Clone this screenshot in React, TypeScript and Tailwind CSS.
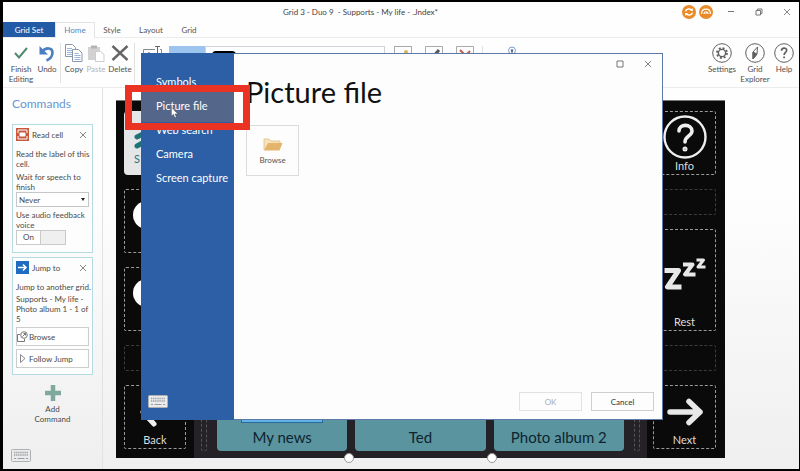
import type { ReactNode } from "react";

const NAV_TOP = "Symbols";
const NAV_REST = ["Web search", "Camera", "Screen capture"];
const ALBUMS = ["My news", "Ted", "Photo album 2"];

function KeyboardIcon({ className = "" }: { className?: string }) {
  return (
    <svg viewBox="0 0 20 13" className={`h-[13px] w-5 ${className}`} aria-hidden="true">
      <rect x="0.5" y="0.5" width="19" height="12" rx="1" fill="#e9ebee" stroke="#b0b0b0" />
      <path d="M3 3.5h14M3 6h14" stroke="#9c9c9c" strokeWidth="1.4" strokeDasharray="1.3 0.8" />
      <path d="M3 9.5h2M6.5 9.5h7M15 9.5h2" stroke="#9c9c9c" strokeWidth="1.2" />
    </svg>
  );
}

function CloseIcon({ className = "" }: { className?: string }) {
  return (
    <svg viewBox="0 0 8 8" className={`size-2 ${className}`} aria-hidden="true">
      <path d="M1 1l6 6M7 1L1 7" stroke="#777" strokeWidth="0.9" fill="none" />
    </svg>
  );
}

function ToolButton({ label, width, muted, children }: {
  label: string;
  width: string;
  muted?: boolean;
  children: ReactNode;
}) {
  return (
    <button
      className={`flex shrink-0 flex-col items-center gap-px text-[8px] leading-[10px] ${width} ${
        muted ? "text-[#b5b5b5]" : "text-[#505050]"
      }`}
    >
      <span className="flex h-5 items-center">{children}</span>
      {label}
    </button>
  );
}

function TitleBar() {
  return (
    <div className="flex h-5 shrink-0 items-center pr-2">
      <h1 className="flex-1 pl-9 text-center text-[8px] whitespace-pre text-[#444]">
        Grid 3 - Duo 9  - Supports - My life - .Jndex*
      </h1>
      <div className="flex items-center gap-[2px] text-[#777]">
        <svg viewBox="0 0 14 14" className="size-[14px]" aria-hidden="true">
          <circle cx="7" cy="7" r="7" fill="#e88b28" />
          <path d="M3.5 6.3C4 3.8 8.5 3 10 5.4M10.5 7.7C10 10.2 5.5 11 4 8.6" stroke="#fff" strokeWidth="1.4" fill="none" />
          <path d="M10.8 3v3H8zM3.2 11V8H6z" fill="#fff" />
        </svg>
        <svg viewBox="0 0 14 14" className="ml-px size-[14px]" aria-hidden="true">
          <circle cx="7" cy="7" r="7" fill="#e88b28" />
          <path d="M2.6 9C2.6 2.6 11.4 2.6 11.4 9M5 9c0-3 4-3 4 0" stroke="#fff" strokeWidth="1.2" fill="none" />
          <path d="M6.5 9L8.5 7" stroke="#fff" />
        </svg>
        <button aria-label="Minimise" className="ml-3 flex w-2 items-center">
          <svg viewBox="0 0 8 8" className="size-2"><path d="M1 3.5h6" stroke="currentColor" /></svg>
        </button>
        <button aria-label="Restore" className="ml-[18px]">
          <svg viewBox="0 0 8 8" className="size-2">
            <path d="M1 2.5h4.5V7H1zM2.5 2.5V1H7v4.5H5.5" stroke="currentColor" fill="none" />
          </svg>
        </button>
        <button aria-label="Close window" className="ml-[18px]"><CloseIcon /></button>
      </div>
    </div>
  );
}

function Ribbon() {
  return (
    <>
      <nav className="flex h-4 shrink-0 items-stretch border-b border-[#ececec] text-[8px] leading-4 text-[#555]">
        <a href="#gridset" className="w-[52px] bg-[#235aa6] text-center text-white">Grid Set</a>
        <a href="#home" className="-mb-px w-10 border border-b-0 border-[#e4e4e4] bg-[#fdfdfd] text-center leading-[14px] text-[#5484c4]">Home</a>
        <a href="#style" className="w-[34px] text-center">Style</a>
        <a href="#layout" className="w-11 text-center">Layout</a>
        <a href="#grid" className="w-8 text-center">Grid</a>
      </nav>
      <div className="flex h-[50px] shrink-0 items-start border-b border-[#ececec] pt-[5px] pl-1">
        <ToolButton label="Finish Editing" width="w-7">
          <svg viewBox="0 0 14 14" className="size-[14px]"><path d="M1 7l4 4.5L13 2" stroke="#4f8a6e" strokeWidth="2" fill="none" /></svg>
        </ToolButton>
        <ToolButton label="Undo" width="w-6">
          <svg viewBox="0 0 16 18" className="h-[18px] w-4">
            <path d="M3 7.500C7 3 13.500 3.500 13.500 8.500C13.500 12.500 11 15 7.500 16.500" stroke="#4b7fc2" strokeWidth="2.600" fill="none" />
            <path d="M0.500 2v8.500H9z" fill="#4b7fc2" />
          </svg>
        </ToolButton>
        <span className="mx-px h-10 w-px bg-[#e2e2e2]" />
        <ToolButton label="Copy" width="w-6">
          <svg viewBox="0 0 18 18" className="size-[18px]" fill="#fff" stroke="#8b97a6">
            <path d="M0.500 0.500h7l3 3v9h-10z" />
            <path d="M2 4.500h5M2 6.500h6M2 8.500h6M2 10.500h6" stroke="#9cb4d6" />
            <path d="M7.500 5.500h6l3.500 3.500v8.500h-9.500z" />
            <path d="M9.500 9.500h4M9.500 11.500h6M9.500 13.500h6M9.500 15.500h6" stroke="#9cb4d6" />
          </svg>
        </ToolButton>
        <ToolButton label="Paste" width="w-5" muted>
          <svg viewBox="0 0 18 18" className="size-[18px]">
            <path d="M1 3h12v13H1z" fill="#d2d2d2" />
            <path d="M4 1.500h6v3H4z" fill="#b5b5b5" />
            <path d="M8.500 7.500h5l3.500 3v7H8.500z" fill="#fff" stroke="#ccc" />
          </svg>
        </ToolButton>
        <ToolButton label="Delete" width="w-7">
          <svg viewBox="0 0 18 16" className="h-4 w-[18px]"><path d="M1.500 1l15 14M16.500 1L1.500 15" stroke="#666" strokeWidth="2.400" fill="none" /></svg>
        </ToolButton>
        <span className="h-10 w-px bg-[#e2e2e2]" />
        <div className="flex items-start pt-[3px] pl-2">
          <svg viewBox="0 0 20 14" className="h-[14px] w-5" fill="none" stroke="#8a8a8a">
            <path d="M12 3.500H0.500v10h18v-10H17" />
            <path d="M12 0.500h5M14.500 0.500v10" stroke="#666" />
            <path d="M3 11l3-5 3 5" />
          </svg>
          <span className="ml-[6px] h-5 w-9 bg-[#9cc4ee]" />
          <span className="h-5 w-[180px] border border-[#cfd3d8] bg-white pt-1 pl-[6px]">
            <span className="block h-3 w-6 rounded-sm border-2 border-black" />
          </span>
          <span className="ml-[9px] flex h-5 w-[18px] justify-end border border-[#aaa] p-[3px]">
            <span className="size-1 rounded-full bg-[#dcb45c]" />
          </span>
          <svg viewBox="0 0 18 20" className="ml-[13px] h-5 w-[18px]" fill="none">
            <path d="M0.500 0.500h17v19H0.500z" stroke="#aaa" />
            <path d="M14 4l-7 8" stroke="#555" strokeWidth="3" />
          </svg>
          <svg viewBox="0 0 18 20" className="ml-[13px] h-5 w-[18px]" fill="none">
            <path d="M0.500 0.500h17v19H0.500z" stroke="#aaa" />
            <path d="M4 4l8 8M14 5l-8 8" stroke="#c85a46" strokeWidth="2" />
          </svg>
          <span className="ml-2 h-5 w-px bg-[#e2e2e2]" />
          <svg viewBox="0 0 10 16" className="ml-6 h-4 w-[10px]" fill="none">
            <circle cx="5" cy="4.500" r="3.500" stroke="#7d9cc8" />
            <circle cx="5" cy="4.500" r="1.300" fill="#4a6fa6" />
            <path d="M5 5v10" stroke="#555" />
          </svg>
        </div>
        <div className="ml-auto flex pr-px">
          <ToolButton label="Settings" width="w-9">
            <svg viewBox="0 0 20 20" className="size-5" fill="none" stroke="#5f5f5f">
              <circle cx="10" cy="10" r="9.300" />
              <circle cx="10" cy="10" r="3.600" strokeWidth="1.400" />
              <circle cx="10" cy="10" r="5" strokeWidth="1.800" strokeDasharray="2 1.927" />
            </svg>
          </ToolButton>
          <ToolButton label="Grid Explorer" width="w-[30px]">
            <svg viewBox="0 0 20 20" className="size-5" fill="none" stroke="#5f5f5f">
              <circle cx="10" cy="10" r="9.300" />
              <path d="M12.500 4L8 9v7l4-5z" />
              <path d="M8 9l4 2-4 5z" fill="#5f5f5f" />
            </svg>
          </ToolButton>
          <ToolButton label="Help" width="w-7">
            <svg viewBox="0 0 20 20" className="size-5" fill="none" stroke="#5f5f5f">
              <circle cx="10" cy="10" r="9.300" />
              <path d="M7.500 7.800c0-3.600 5.200-3.500 5.200-0.500 0 2-2.600 2.200-2.600 4.700M10.100 13.500v1.800" strokeWidth="1.700" />
            </svg>
          </ToolButton>
        </div>
      </div>
    </>
  );
}

function CommandCard({ title, icon, children }: { title: string; icon: ReactNode; children: ReactNode }) {
  return (
    <section className="mb-1 border border-[#b5dbe2] bg-[#fdfdfd] px-[3px] pt-[3px] pb-[6px]">
      <header className="mb-2 flex items-center">
        {icon}
        <h3 className="ml-[3px] flex-1">{title}</h3>
        <button aria-label={`Remove ${title}`} className="mr-[2px]"><CloseIcon /></button>
      </header>
      {children}
    </section>
  );
}

function Commands() {
  return (
    <aside className="flex w-[100px] shrink-0 flex-col border-r border-[#e2e2e2] pt-2 pr-[9px] pb-[7px] pl-[9px] text-[8px] leading-[10px] text-[#4a4a4a]">
      <h2 className="mb-3 text-[12px] leading-4 text-[#6796d2]">Commands</h2>

      <CommandCard
        title="Read cell"
        icon={
          <svg viewBox="0 0 13 13" className="size-[13px]" fill="none">
            <rect width="13" height="13" fill="#c9583c" />
            <path d="M2 5V2h9v3M2 8v3h9V8" stroke="#fff" />
            <rect x="3.500" y="4.500" width="6" height="4" rx="1" fill="#fff" />
          </svg>
        }
      >
        <p className="-mr-1">Read the label of this cell.</p>
        <label htmlFor="wait" className="mt-[3px] block">Wait for speech to finish</label>
        <div className="relative">
          <select id="wait" className="h-[15px] w-full appearance-none border border-[#c6c6c6] bg-white pl-[2px] text-[8px] leading-3">
            <option>Never</option>
          </select>
          <span className="pointer-events-none absolute top-[6px] right-1 border-x-2 border-t-[3px] border-x-transparent border-t-[#222]" />
        </div>
        <label htmlFor="audio" className="mt-[3px] block">Use audio feedback voice</label>
        <label className="relative mb-px flex h-[15px] w-[50px] border border-[#cacaca] bg-[#efefef] leading-[13px]">
          <input id="audio" type="checkbox" defaultChecked className="sr-only" />
          <span className="w-1/2 border-r border-[#cacaca] bg-white text-center">On</span>
        </label>
      </CommandCard>

      <CommandCard
        title="Jump to"
        icon={
          <svg viewBox="0 0 13 13" className="size-[13px]" fill="none">
            <rect width="13" height="13" fill="#1f6cc0" />
            <path d="M2 6.500h8M7 3.500l3 3-3 3" stroke="#fff" strokeWidth="1.500" />
          </svg>
        }
      >
        <p className="-mr-1">Jump to another grid.</p>
        <p className="mt-[2px] mb-[3px]">Supports - My life - Photo album 1 - 1 of 5</p>
        <button className="mb-[3px] flex h-[19px] w-full items-center gap-px border border-[#cdcdcd] bg-white">
          <svg viewBox="0 0 11 11" className="size-[11px]" fill="none" stroke="#777">
            <path d="M3 3.500H0.500v7h7V8" />
            <circle cx="7" cy="4" r="3.300" />
            <path d="M5.500 5.500l3-3M6.500 2.500h2v2" />
          </svg>
          Browse
        </button>
        <button className="flex h-[19px] w-full items-center gap-px border border-[#cdcdcd] bg-white">
          <svg viewBox="0 0 11 11" className="size-[11px]" fill="none" stroke="#888">
            <path d="M3.500 1.500v8L8 5.500z" />
          </svg>
          Follow Jump
        </button>
      </CommandCard>

      <button className="mx-auto mt-[6px] flex w-10 flex-col items-center gap-[3px]">
        <svg viewBox="0 0 16 16" className="size-4"><path d="M8 0v16M0 8h16" stroke="#7fa99c" strokeWidth="4.500" /></svg>
        Add Command
      </button>

      <button aria-label="On-screen keyboard" className="mt-auto -ml-px self-start"><KeyboardIcon /></button>
    </aside>
  );
}

function Cell({ label, size = "h-16", dim, children }: {
  label?: string;
  size?: string;
  dim?: boolean;
  children?: ReactNode;
}) {
  return (
    <div
      className={`flex shrink-0 flex-col items-center justify-between rounded-xs border border-dashed pt-[3px] pb-[2px] text-[11px] leading-3 text-[#ddd] ${size} ${
        dim ? "border-[#3c3c3c]" : "border-[#9a9a9a]"
      }`}
    >
      {children}
      {label}
    </div>
  );
}

function GridCanvas() {
  return (
    <main className="flex min-w-0 flex-1 pt-3 pr-[74px] pb-[11px] pl-[13px]">
      <div className="relative flex flex-1 border-t border-[#777] bg-[#0a0a0a]">
        <div className="flex w-[78px] shrink-0 flex-col gap-[14px] px-2 pt-[10px]">
          <div className="h-16 shrink-0 rounded-sm bg-[#e4e6e8] pt-5 pl-[10px] text-[11px] text-[#2d6e75]">
            <svg viewBox="0 0 20 20" className="size-5" fill="none" stroke="#1f7378" strokeWidth="5" strokeLinecap="round">
              <path d="M3 6l8-4M3 15l9-5" />
            </svg>
            S
          </div>
          <Cell><span className="-ml-4 mt-2 size-7 rounded-full bg-white" /></Cell>
          <Cell><span className="-ml-4 mt-2 size-7 rounded-full bg-white" /></Cell>
          <Cell size="h-[26px]" dim />
          <Cell label="Back">
            <svg viewBox="0 0 36 30" className="mt-2 h-[30px] w-9" fill="none" stroke="#eee" strokeWidth="5" strokeLinecap="round" strokeLinejoin="round">
              <path d="M33 15H6M16 6L6 15l11 12" />
            </svg>
          </Cell>
        </div>

        <div className="flex min-w-0 flex-1 items-end gap-2 bg-[#242226] px-[7px] pb-[7px]">
          <span className="mr-[2px] h-[68px] w-[6px] rounded-xs border border-dashed border-[#555]" />
          {ALBUMS.map((name, i) => (
            <div key={name} className="flex h-[90px] flex-1 flex-col items-center justify-between rounded-sm bg-[#5a949f] pb-[6px] text-[15px] leading-4 text-[#0d2430]">
              <span className={i === 0 ? "h-[62px] w-[82px] border border-[#2c6a9c] bg-[#62b2e6]" : "h-[62px]"} />
              {name}
            </div>
          ))}
          <span className="ml-[2px] h-[68px] w-[6px] rounded-xs border border-dashed border-[#555]" />
        </div>

        <div className="flex w-[78px] shrink-0 flex-col gap-[14px] pt-[10px] pr-[9px] pl-[6px]">
          <Cell label="Info">
            <svg viewBox="0 0 44 44" className="size-11" fill="none" stroke="#eee" strokeLinecap="round">
              <circle cx="22" cy="22" r="20.500" strokeWidth="2.400" />
              <path d="M16 16c0-8 13-7 13 0 0 5-7 5-7 11" strokeWidth="3.600" />
              <circle cx="22" cy="34" r="1" strokeWidth="3" />
            </svg>
          </Cell>
          <Cell size="h-[26px]" dim />
          <Cell size="h-[102px]" label="Rest">
            <svg viewBox="0 0 44 34" className="mt-6 h-[34px] w-11" fill="none" stroke="#e8e8e8" strokeLinecap="square" strokeLinejoin="round">
              <path d="M4 13.500h11.500L4.500 30h11.500" strokeWidth="5" />
              <path d="M22 7.500h7.500l-7.500 10h8.500" strokeWidth="4" />
              <path d="M35 3h5.500l-5.500 7h6" strokeWidth="3" />
            </svg>
          </Cell>
          <Cell size="h-[26px]" dim />
          <Cell label="Next">
            <svg viewBox="0 0 36 30" className="mt-2 h-[30px] w-9" fill="none" stroke="#e8e8e8" strokeWidth="5.500" strokeLinecap="round" strokeLinejoin="round">
              <path d="M3 15h30M22 4.500l11 10.500-11 10.500" />
            </svg>
          </Cell>
        </div>

        {/* resize handles on the canvas edge */}
        <span className="absolute -bottom-[5px] left-[37.5%] size-[10px] rounded-full border border-[#999] bg-white" />
        <span className="absolute -bottom-[5px] left-[61%] size-[10px] rounded-full border border-[#999] bg-white" />
      </div>
    </main>
  );
}

function PictureDialog() {
  return (
    <div
      role="dialog"
      aria-labelledby="dialog-title"
      className="absolute top-[53px] right-[137px] bottom-[51px] left-[141px] flex border border-[#5c7aa8] bg-[#fdfdfd]"
    >
      <nav className="-my-px -ml-px flex w-[93px] shrink-0 flex-col bg-[#2c5fa5] pt-[17px] pb-3 text-[11px] leading-6 whitespace-nowrap text-white">
        <a href="#symbols" className="pl-[15px]">{NAV_TOP}</a>
        <div className="relative z-10 -my-1 bg-[#54668a]">
          <a href="#file" className="block py-1 pl-[15px]">Picture file</a>
          <span className="pointer-events-none absolute -top-[5px] -right-4 -bottom-2 -left-4 border-[7px] border-[#ea3323]" />
          <svg viewBox="0 0 10 14" className="absolute top-[17px] left-[30px] h-3 w-2">
            <path d="M0.500 0.500v10.500l2.600-2.300 1.700 4.300 2-0.900-1.800-4h3.800z" fill="#fff" stroke="#333" strokeWidth="0.500" />
          </svg>
        </div>
        {NAV_REST.map((item) => (
          <a key={item} href="#source" className="pl-[15px]">{item}</a>
        ))}
        <button aria-label="On-screen keyboard" className="mt-auto ml-[7px] self-start"><KeyboardIcon /></button>
      </nav>

      <div className="flex min-w-0 flex-1 flex-col pr-2 pb-2 pl-3">
        <div className="flex h-5 items-center justify-end gap-5 pr-[2px] text-[#777]">
          <button aria-label="Maximise">
            <svg viewBox="0 0 8 8" className="size-2"><path d="M1 1h6v6H1z" stroke="currentColor" fill="none" /></svg>
          </button>
          <button aria-label="Close"><CloseIcon /></button>
        </div>
        <h2 id="dialog-title" className="text-[29px] leading-9 text-[#111]">Picture file</h2>
        <button className="mt-[15px] flex h-[51px] w-[53px] flex-col items-center justify-center gap-1 border border-[#dcdcdc] text-[8px] leading-[10px] text-[#555]">
          <svg viewBox="0 0 20 14" className="h-[14px] w-5">
            <path d="M1 13V2h5l2 2h9v3" fill="#f6e3bc" stroke="#e3bd7c" strokeWidth="0.800" />
            <path d="M1 13.500L5 6h14.500l-3 7.500z" fill="#e3b56c" />
          </svg>
          Browse
        </button>
        <div className="mt-auto flex justify-end gap-[9px] text-[8px]">
          <button disabled className="h-[19px] w-[63px] border border-[#e2e2e2] text-[#aaa]">OK</button>
          <button className="h-[19px] w-[63px] border border-[#cfcfcf] text-[#333]">Cancel</button>
        </div>
      </div>
    </div>
  );
}

export default function App() {
  return (
    <div className="relative h-screen min-h-[471px] bg-black pt-[2px] pr-px pb-[2px] pl-[3px] font-['Lato','Noto_Sans',sans-serif]">
      <div className="flex h-full flex-col bg-linear-to-b from-[#fefefe] from-40% to-[#efefef]">
        <TitleBar />
        <Ribbon />
        <div className="flex min-h-0 flex-1">
          <Commands />
          <GridCanvas />
        </div>
      </div>
      <PictureDialog />
    </div>
  );
}
